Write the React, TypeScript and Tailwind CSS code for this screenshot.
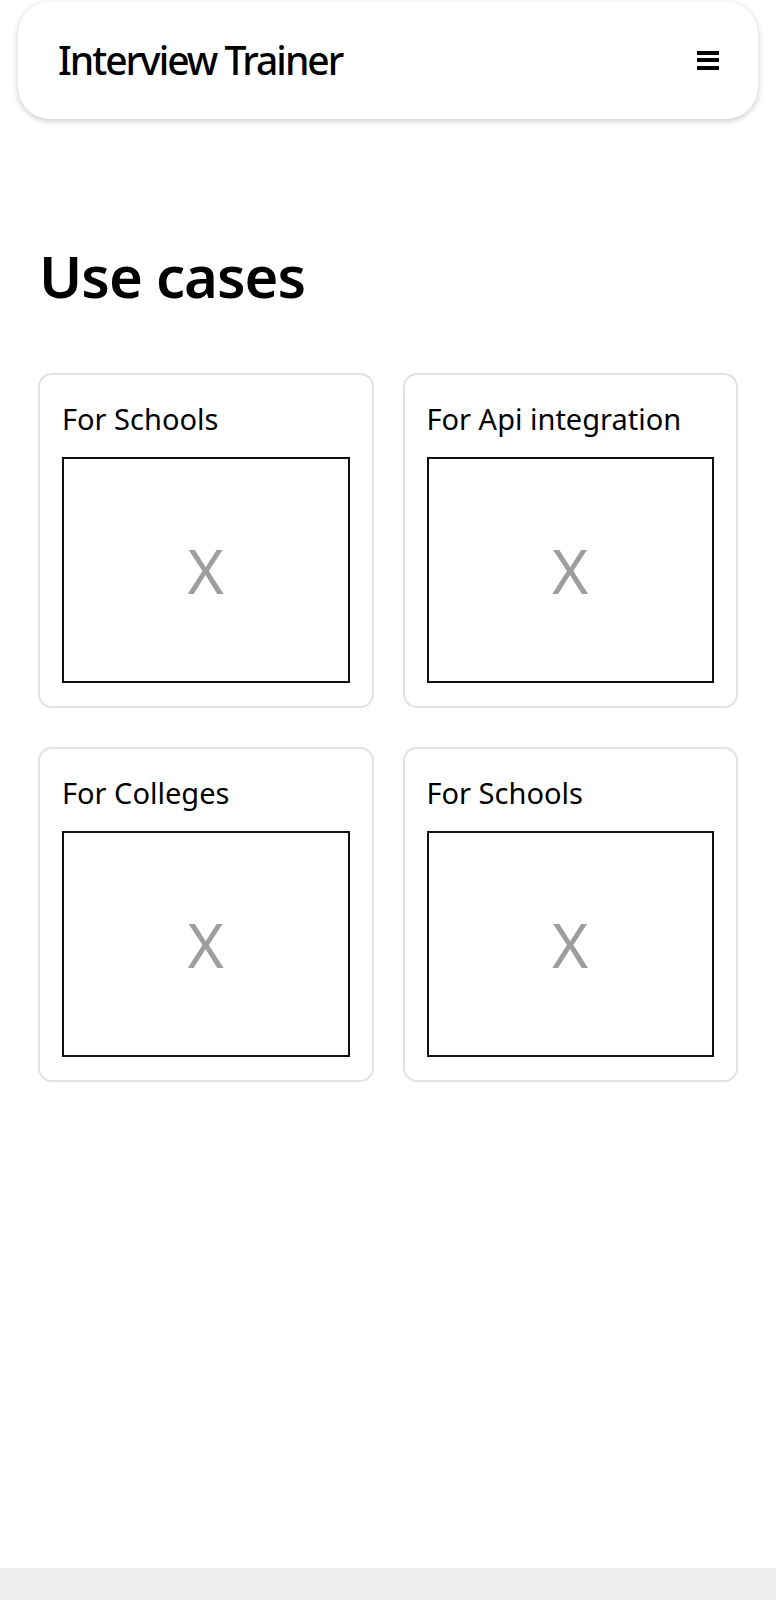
const cases = [
  { title: "For Schools" },
  { title: "For Api integration" },
  { title: "For Colleges" },
  { title: "For Schools" },
];

function MenuIcon() {
  return (
    <svg width="22" height="20" viewBox="0 0 22 20" fill="#000">
      <rect x="0" y="0" width="22" height="4" />
      <rect x="0" y="7" width="22" height="4" />
      <rect x="0" y="15" width="22" height="4" />
    </svg>
  );
}

function CaseCard({ title }: { title: string }) {
  return (
    <article className="rounded-[14px] border-2 border-[#e2e2e2] bg-white px-[22px] pt-[24px] pb-[23px]">
      <h3 className="text-[29px] leading-[40px] text-black">{title}</h3>
      <div className="mt-[18px] flex h-[226px] items-center justify-center border-2 border-[#111]">
        <span className="text-[62px] leading-none font-normal text-[#9e9e9e]">X</span>
      </div>
    </article>
  );
}

export default function App() {
  return (
    <div
      className="flex min-h-[1600px] flex-col bg-white"
      style={{ fontFamily: '"Noto Sans", "Open Sans", sans-serif' }}
    >
      <div className="flex-1">
        <header className="mx-[18px] mt-[2px] flex h-[117px] items-center justify-between rounded-[32px] bg-white pl-[40px] pr-[39px] shadow-[0_2px_6px_rgba(0,0,0,0.22)]">
          <h1 className="text-[39px] font-medium tracking-[-2px] text-black">
            Interview Trainer
          </h1>
          <MenuIcon />
        </header>

        <main className="px-[38px] pt-[117px]">
          <h2 className="pl-[1px] text-[58px] leading-[79px] font-semibold tracking-[-1px] text-black">
            Use cases
          </h2>
          <div className="mt-[58px] grid grid-cols-2 gap-x-[29px] gap-y-[39px]">
            {cases.map((c, i) => (
              <CaseCard key={i} title={c.title} />
            ))}
          </div>
        </main>
      </div>
      <div className="h-[32px] bg-[#efefef]" />
    </div>
  );
}
